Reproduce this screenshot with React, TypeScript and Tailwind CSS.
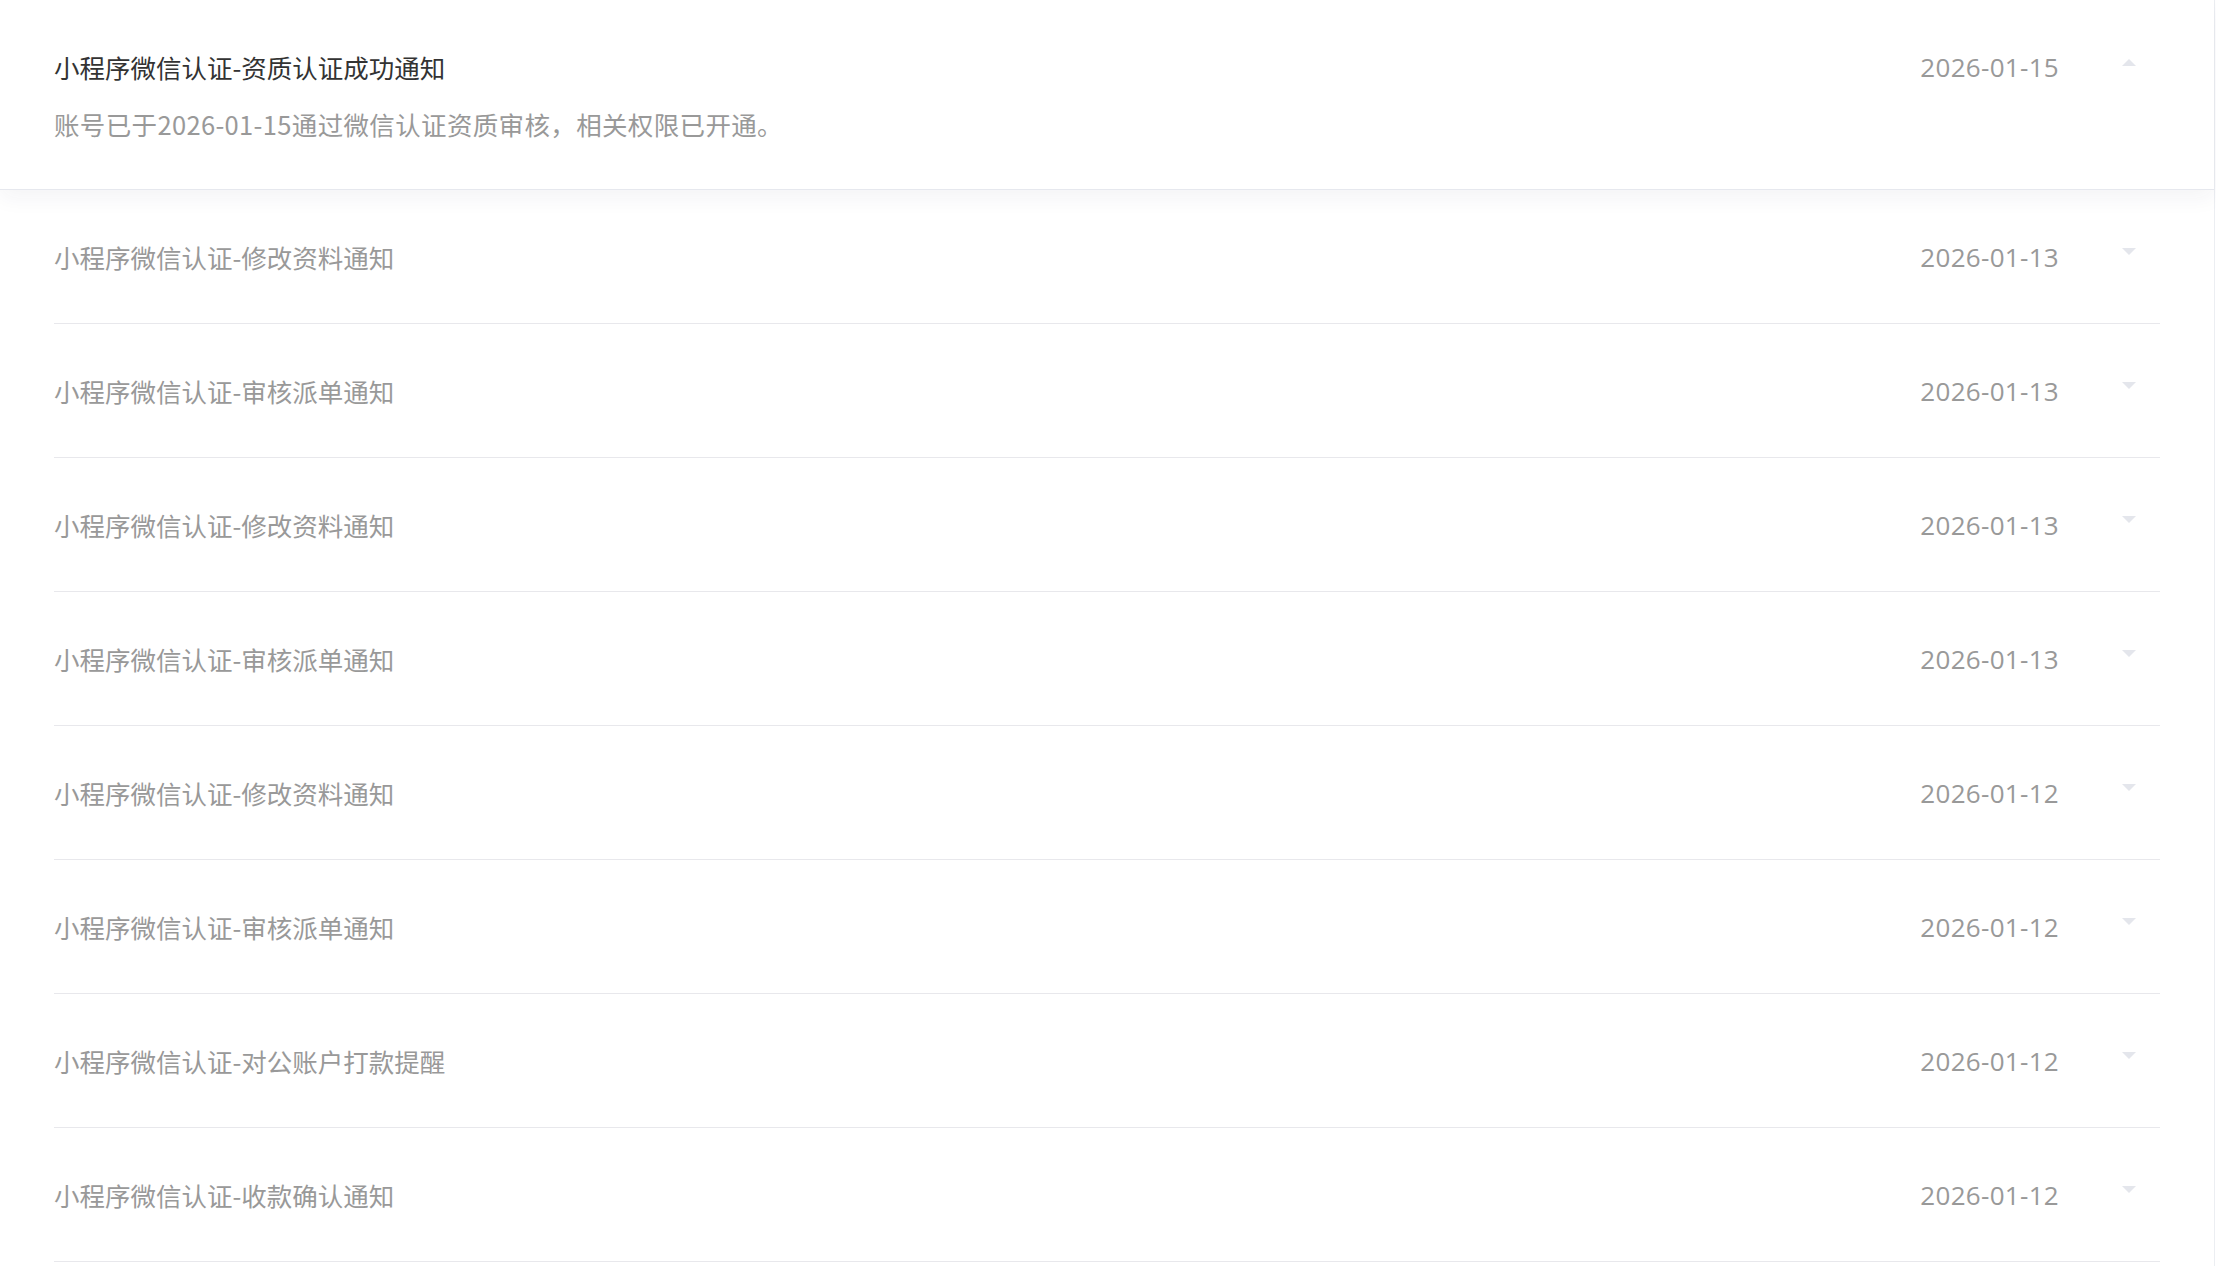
import React, { useState } from 'react';

interface Notice {
  id: number;
  title: string;
  date: string;
  content: string;
}

const notices: Notice[] = [
  { id: 1, title: '小程序微信认证-资质认证成功通知', date: '2026-01-15', content: '账号已于2026-01-15通过微信认证资质审核，相关权限已开通。' },
  { id: 2, title: '小程序微信认证-修改资料通知', date: '2026-01-13', content: '' },
  { id: 3, title: '小程序微信认证-审核派单通知', date: '2026-01-13', content: '' },
  { id: 4, title: '小程序微信认证-修改资料通知', date: '2026-01-13', content: '' },
  { id: 5, title: '小程序微信认证-审核派单通知', date: '2026-01-13', content: '' },
  { id: 6, title: '小程序微信认证-修改资料通知', date: '2026-01-12', content: '' },
  { id: 7, title: '小程序微信认证-审核派单通知', date: '2026-01-12', content: '' },
  { id: 8, title: '小程序微信认证-对公账户打款提醒', date: '2026-01-12', content: '' },
  { id: 9, title: '小程序微信认证-收款确认通知', date: '2026-01-12', content: '' },
];

const Caret: React.FC<{ up: boolean }> = ({ up }) => (
  <svg width="14" height="7" viewBox="0 0 14 7" className="block">
    {up ? <path d="M7 0 L14 7 L0 7 Z" fill="#e4e6ec" /> : <path d="M0 0 L14 0 L7 7 Z" fill="#e4e6ec" />}
  </svg>
);

const DateText: React.FC<{ date: string }> = ({ date }) => (
  <div
    className="text-[26px] leading-[36px] tracking-[0.3px] text-[#999999]"
    style={{ fontFamily: '"Open Sans", "Noto Sans CJK SC", sans-serif' }}
  >
    {date}
  </div>
);

const App: React.FC = () => {
  const [openId, setOpenId] = useState<number>(1);

  return (
    <div
      className="min-h-screen bg-white text-[25.5px]"
      style={{ fontFamily: '"Noto Sans CJK SC", "Noto Sans", sans-serif' }}
    >
      <div className="w-[2215px] border-r border-[#eceef2] min-h-screen">
        {notices.map((n) =>
          n.id === openId ? (
            <div
              key={n.id}
              className="relative z-10 bg-white border-b border-[#e6e8ee] shadow-[0_8px_20px_rgba(30,40,70,0.05)] pt-[49px] pb-[47px] cursor-pointer"
              onClick={() => setOpenId(0)}
            >
              <div className="mx-[54px] pr-[24px] flex items-center">
                <div className="flex-1 leading-[36px] text-[#333333]">{n.title}</div>
                <DateText date={n.date} />
                <div className="w-[77px] flex justify-end pb-[10px]">
                  <Caret up />
                </div>
              </div>
              <div className="mx-[54px] mt-[21px] leading-[36px] tracking-[0.35px] text-[#999999]">{n.content}</div>
            </div>
          ) : (
            <div key={n.id} className="mx-[54px] cursor-pointer" onClick={() => setOpenId(n.id)}>
              <div className="h-[134px] border-b border-[#e8e8ec] pr-[24px] flex items-center">
                <div className="flex-1 leading-[36px] text-[#999999]">{n.title}</div>
                <DateText date={n.date} />
                <div className="w-[77px] flex justify-end pb-[10px]">
                  <Caret up={false} />
                </div>
              </div>
            </div>
          )
        )}
      </div>
    </div>
  );
};

export default App;
